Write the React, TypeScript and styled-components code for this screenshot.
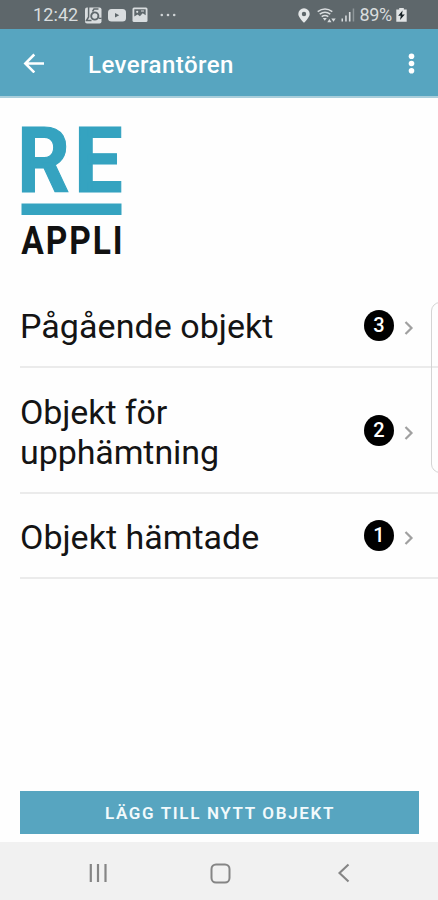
import React from "react";
import styled, { createGlobalStyle } from "styled-components";

const GlobalStyle = createGlobalStyle`
  * { box-sizing: border-box; }
  body { margin: 0; background: #fefefe; font-family: Roboto, sans-serif; }
`;

const Screen = styled.div`
  position: relative;
  display: flex;
  flex-direction: column;
  width: 438px;
  height: 900px;
  overflow: hidden;
  background: #fefefe;
`;

const StatusBar = styled.header`
  display: flex;
  justify-content: space-between;
  align-items: center;
  flex: none;
  height: 29px;
  padding: 1px 31px 0 33px;
  background: #5e676b;
  color: #d9dddf;
`;

const StatusGroup = styled.div<{ $gap: number }>`
  display: flex;
  align-items: center;
  gap: ${(p) => p.$gap}px;
`;

const StatusText = styled.span<{ $spacing: number }>`
  font-size: 18px;
  line-height: 28px;
  letter-spacing: ${(p) => p.$spacing}px;
`;

const DotsSlot = styled.span`
  display: flex;
  padding-left: 6px;
`;

const PinSlot = styled.span`
  display: flex;
  padding-right: 3px;
`;

const AppBar = styled.div`
  display: flex;
  align-items: center;
  flex: none;
  height: 69px;
  padding: 0 23px;
  border-bottom: 2px solid #a9cedb;
  background: #57a5c0;
  color: #fff;
`;

const Title = styled.h1`
  flex: 1;
  margin: 4px 0 0 43px;
  font-size: 24px;
  font-weight: 500;
  line-height: 30px;
  letter-spacing: 0.45px;
`;

const Logo = styled.svg`
  display: block;
  flex: none;
  margin: 22px 0 0 20px;
  overflow: visible;
`;

const List = styled.ul`
  flex: none;
  margin: 22px 0 0 20px;
  padding: 0;
  list-style: none;
`;

const Item = styled.li<{ $height: number }>`
  display: flex;
  align-items: center;
  height: ${(p) => p.$height}px;
  padding-right: 23px;
  border-bottom: 2px solid #ebebeb;
`;

const ItemLabel = styled.span<{ $top: number; $spacing: number }>`
  width: 280px;
  margin-top: ${(p) => p.$top}px;
  color: #141414;
  font-size: 34px;
  line-height: 40px;
  letter-spacing: ${(p) => p.$spacing}px;
  white-space: pre-line;
`;

const Count = styled.span`
  display: flex;
  align-items: center;
  justify-content: center;
  width: 30px;
  height: 31px;
  margin: 0 10px 0 auto;
  border-radius: 50%;
  background: #000;
  color: #fff;
  font-size: 20px;
  font-weight: 500;
  line-height: 31px;
`;

const Chevron = styled.svg`
  margin-top: 5px;
`;

const EdgePanel = styled.div`
  position: absolute;
  left: 431px;
  top: 302px;
  width: 20px;
  height: 171px;
  border: 1.5px solid #d4d4d4;
  border-radius: 9px;
`;

const AddButton = styled.button`
  flex: none;
  height: 43px;
  margin: auto 19px 8px 20px;
  padding: 1px 0 0 1px;
  border: 0;
  background: #57a5c0;
  color: #f2fafc;
  font-family: inherit;
  font-size: 17px;
  font-weight: 600;
  letter-spacing: 1.65px;
`;

const NavBar = styled.nav`
  display: flex;
  align-items: center;
  justify-content: space-between;
  flex: none;
  height: 58px;
  padding: 4px 88px 0 88px;
  background: #f1f1f1;
`;

const HomeIcon = styled.svg`
  margin-right: 5px;
`;

const items = [
  { label: "Pågående objekt", count: 3, height: 84, top: 1, spacing: 0.05 },
  { label: "Objekt för\nupphämtning", count: 2, height: 126, top: 3, spacing: -0.1 },
  { label: "Objekt hämtade", count: 1, height: 85, top: 3, spacing: 0 },
];

const AppIcon = () => (
  <svg width="18" height="17" viewBox="0 0 18 17">
    <rect x="1" y="0.500" width="16.500" height="16" rx="2" fill="#d9dddf" />
    <path d="M4.600 0v10L2.500 13.500h5M8.500 4.500l1.500-2.500h4.500" fill="none" stroke="#5e676b" strokeWidth="1.500" />
    <circle cx="10.800" cy="9" r="3.600" fill="none" stroke="#5e676b" strokeWidth="1.900" />
    <path d="M14.200 9q.3 3.500 3.500 2" fill="none" stroke="#5e676b" strokeWidth="1.300" />
  </svg>
);

const VideoIcon = () => (
  <svg width="18" height="14" viewBox="0 0 18 14">
    <rect y="1" width="18" height="12.500" rx="3.500" fill="#d9dddf" />
    <path d="M7 4.900l4.200 2.300L7 9.500z" fill="#5e676b" />
  </svg>
);

const ImageIcon = () => (
  <svg width="16" height="16" viewBox="0 0 16 16">
    <rect x="0.500" y="0.500" width="15" height="14.500" rx="1.500" fill="#d9dddf" />
    <path d="M2.300 2.300h11.400v6l-3-2-2.800 3-2.300-1.800-3.300 2z" fill="#5e676b" />
    <circle cx="5.200" cy="4.800" r="1.100" fill="#d9dddf" />
    <path d="M9 4h3" stroke="#d9dddf" />
  </svg>
);

const DotsIcon = () => (
  <svg width="16" height="4" viewBox="0 0 16 4" fill="#d0d4d6">
    <circle cx="1.800" cy="2" r="1.300" />
    <circle cx="8" cy="2" r="1.300" />
    <circle cx="14.200" cy="2" r="1.300" />
  </svg>
);

const PinIcon = () => (
  <svg width="12" height="15" viewBox="0 0 12 15">
    <path
      d="M6 .3A5.700 5.700 0 0 0 .3 6C.3 9.500 6 14.800 6 14.800S11.700 9.500 11.700 6A5.700 5.700 0 0 0 6 .3zM6 3.800a2.200 2.200 0 1 1 0 4.400 2.200 2.200 0 0 1 0-4.400z"
      fill="#e4e7e8"
      fillRule="evenodd"
    />
  </svg>
);

const WifiIcon = () => (
  <svg width="20" height="15" viewBox="0 0 20 15" fill="none" stroke="#d9dddf" strokeWidth="1.500">
    <path d="M.7 3.700Q8 -1.500 15.300 3.700M2.700 6.200Q8 2.300 13.300 6.200M4.700 8.600Q8 6.200 11.300 8.600" />
    <path d="M5.800 10H9.800L7.800 12.700z" fill="#d9dddf" stroke="none" />
    <path d="M10.300 14.200h4.200l-2.100-3.200zM14.300 10.500h4.400l-2.200 3.200z" fill="#d9dddf" stroke="none" />
  </svg>
);

const SignalIcon = () => (
  <svg width="14" height="14" viewBox="0 0 14 14" fill="#d9dddf">
    <rect x="0.500" y="10.500" width="1.500" height="3" />
    <rect x="4.200" y="7.500" width="1.500" height="6" />
    <rect x="7.900" y="4" width="1.600" height="9.500" />
    <rect x="11.700" y="0.500" width="1.500" height="13" fill="#8e9699" />
  </svg>
);

const BatteryIcon = () => (
  <svg width="11" height="14" viewBox="0 0 11 14">
    <path d="M3.200 0h4.600v1.500H10.700V13.700H.3V1.500H3.200z" fill="#e1e4e5" />
    <path d="M6.600 2.500L2.200 7.800h2.600L4 12 8.800 6.600H6z" fill="#172126" />
  </svg>
);

const BackArrow = () => (
  <svg width="22" height="20" viewBox="0 0 22 20" fill="none" stroke="#fff" strokeWidth="2.500">
    <path d="M21 10.500H2.500M11.300 1.500L2.300 10.500l9 9" />
  </svg>
);

const MoreIcon = () => (
  <svg width="7" height="22" viewBox="0 0 7 22" fill="#fff">
    <circle cx="3.500" cy="4.200" r="2.800" />
    <circle cx="3.500" cy="11.500" r="2.800" />
    <circle cx="3.500" cy="18.800" r="2.800" />
  </svg>
);

export default function App() {
  return (
    <>
      <GlobalStyle />
      <Screen>
        <StatusBar>
          <StatusGroup $gap={6}>
            <StatusText $spacing={0.1}>12:42</StatusText>
            <AppIcon />
            <VideoIcon />
            <ImageIcon />
            <DotsSlot>
              <DotsIcon />
            </DotsSlot>
          </StatusGroup>
          <StatusGroup $gap={4}>
            <PinSlot>
              <PinIcon />
            </PinSlot>
            <WifiIcon />
            <SignalIcon />
            <StatusText $spacing={-0.3}>89%</StatusText>
            <BatteryIcon />
          </StatusGroup>
        </StatusBar>
        <AppBar>
          <BackArrow />
          <Title>Leverantören</Title>
          <MoreIcon />
        </AppBar>
        <Logo width="120" height="142" viewBox="0 0 120 142" fontFamily="Roboto, sans-serif" fontWeight="700">
          <g fontSize="91" fill="#35a3c0" stroke="#35a3c0" strokeWidth="1.200">
            <text transform="translate(-2.700 71.500) scale(0.900 1)">R</text>
            <text transform="translate(54.100 71.500) scale(0.950 1)">E</text>
          </g>
          <rect x="1.500" y="83.500" width="100" height="11.500" fill="#35a3c0" />
          <text transform="translate(1.300 134) scale(0.860 1)" fontSize="39" letterSpacing="2.200" fill="#111">
            APPLI
          </text>
        </Logo>
        <List>
          {items.map((item) => (
            <Item key={item.label} $height={item.height}>
              <ItemLabel $top={item.top} $spacing={item.spacing}>
                {item.label}
              </ItemLabel>
              <Count>{item.count}</Count>
              <Chevron width="11" height="16" viewBox="0 0 11 16" fill="none" stroke="#a0a0a0" strokeWidth="2.200">
                <path d="M1.500 2l6 6-6 6" />
              </Chevron>
            </Item>
          ))}
        </List>
        <EdgePanel />
        <AddButton>LÄGG TILL NYTT OBJEKT</AddButton>
        <NavBar>
          <svg width="20" height="20" viewBox="0 0 20 20" stroke="#858585" strokeWidth="2.200">
            <path d="M2.800 1v18M10 1v18M17.500 1v18" />
          </svg>
          <HomeIcon width="21" height="21" viewBox="0 0 21 21" fill="none" stroke="#858585" strokeWidth="2">
            <rect x="1.500" y="1.500" width="18" height="18" rx="4.500" />
          </HomeIcon>
          <svg width="13" height="20" viewBox="0 0 13 20" fill="none" stroke="#858585" strokeWidth="2.100">
            <path d="M11.500 1.500L2.500 10l9 8.500" />
          </svg>
        </NavBar>
      </Screen>
    </>
  );
}
